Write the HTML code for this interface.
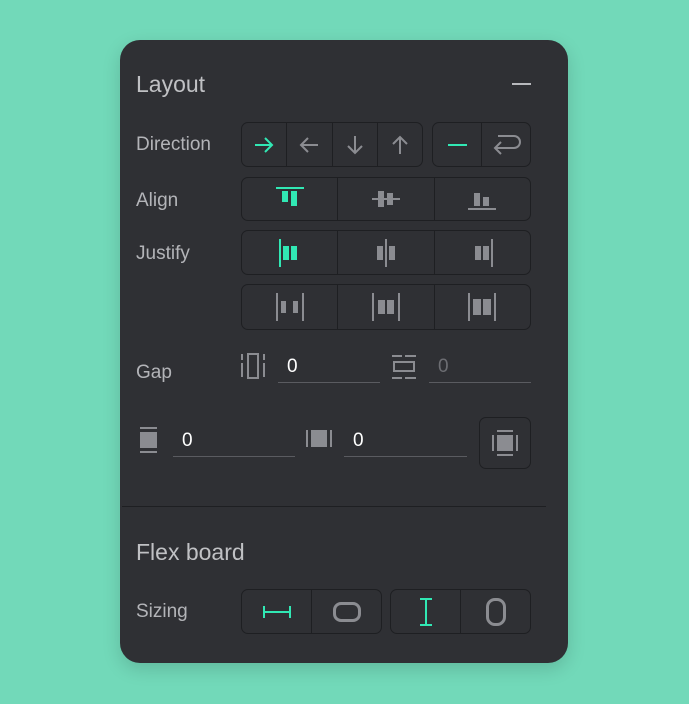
<!DOCTYPE html>
<html><head><style>
*{margin:0;padding:0;box-sizing:border-box}
body{width:689px;height:704px;background:#72d9b9;font-family:"Liberation Sans",sans-serif;position:relative;overflow:hidden}
.p{position:absolute;left:120px;top:40px;width:448px;height:623px;background:#2f3034;border-radius:20px;box-shadow:0 6px 18px rgba(0,0,0,.15)}
.a{position:absolute}
.t{color:#b3b4b8;font-size:19px}
.h{color:#c0c1c4;font-size:23px}
.g{position:absolute;border:1px solid #1e1f22;border-radius:7px;display:flex;overflow:hidden}
.g>div{flex:1;border-left:1px solid #1e1f22;display:flex;align-items:center;justify-content:center}
.g>div:first-child{border-left:none}
.in{position:absolute;border-bottom:1px solid #5a5b60;color:#fff;font-size:19px;padding-left:9px;height:30px;line-height:28px}
svg{display:block}
</style></head><body>
<div class="p"></div>
<div class="a h" style="left:136px;top:71px">Layout</div>
<div class="a" style="left:512px;top:83px;width:19px;height:2px;background:#b8b9bd"></div>

<div class="a t" style="left:136px;top:134px">Direction</div>
<div class="g" style="left:241px;top:122px;width:182px;height:45px">
<div><svg width="22" height="22" viewBox="0 0 22 22" fill="none" stroke="#31e8b4" stroke-width="2"><path d="M2 11h17M12 4l7 7-7 7"/></svg></div>
<div><svg width="22" height="22" viewBox="0 0 22 22" fill="none" stroke="#8b8c91" stroke-width="2"><path d="M20 11H3M10 4l-7 7 7 7"/></svg></div>
<div><svg width="22" height="22" viewBox="0 0 22 22" fill="none" stroke="#8b8c91" stroke-width="2"><path d="M11 2v17M4 12l7 7 7-7"/></svg></div>
<div><svg width="22" height="22" viewBox="0 0 22 22" fill="none" stroke="#8b8c91" stroke-width="2"><path d="M11 20V3M4 10l7-7 7 7"/></svg></div>
</div>
<div class="g" style="left:432px;top:122px;width:99px;height:45px">
<div><div style="width:19px;height:2px;background:#31e8b4"></div></div>
<div><svg width="32" height="28" viewBox="0 0 32 28" fill="none" stroke="#8b8c91" stroke-width="2"><path d="M8 5h16a6 6 0 0 1 0 12H5M11 11l-6 6 6 6"/></svg></div>
</div>

<div class="a t" style="left:136px;top:190px">Align</div>
<div class="g" style="left:241px;top:177px;width:290px;height:44px">
<div><svg width="30" height="24" viewBox="0 0 30 24"><rect x="1" y="0" width="28" height="2" fill="#31e8b4"/><rect x="7" y="4" width="6" height="11" fill="#31e8b4"/><rect x="16" y="4" width="6" height="15" fill="#31e8b4"/></svg></div>
<div><svg width="30" height="24" viewBox="0 0 30 24"><rect x="1" y="11" width="28" height="2" fill="#8b8c91"/><rect x="7" y="4" width="6" height="16" fill="#8b8c91"/><rect x="16" y="6" width="6" height="12" fill="#8b8c91"/></svg></div>
<div><svg width="30" height="24" viewBox="0 0 30 24"><rect x="1" y="21" width="28" height="2" fill="#8b8c91"/><rect x="7" y="6" width="6" height="13" fill="#8b8c91"/><rect x="16" y="10" width="6" height="9" fill="#8b8c91"/></svg></div>
</div>

<div class="a t" style="left:136px;top:243px">Justify</div>
<div class="g" style="left:241px;top:230px;width:290px;height:45px">
<div><svg width="30" height="30" viewBox="0 0 30 30"><rect x="4" y="1" width="2" height="28" fill="#31e8b4"/><rect x="8" y="8" width="6" height="14" fill="#31e8b4"/><rect x="16" y="8" width="6" height="14" fill="#31e8b4"/></svg></div>
<div><svg width="30" height="30" viewBox="0 0 30 30"><rect x="14" y="1" width="2" height="28" fill="#8b8c91"/><rect x="6" y="8" width="6" height="14" fill="#8b8c91"/><rect x="18" y="8" width="6" height="14" fill="#8b8c91"/></svg></div>
<div><svg width="30" height="30" viewBox="0 0 30 30"><rect x="24" y="1" width="2" height="28" fill="#8b8c91"/><rect x="8" y="8" width="6" height="14" fill="#8b8c91"/><rect x="16" y="8" width="6" height="14" fill="#8b8c91"/></svg></div>
</div>
<div class="g" style="left:241px;top:284px;width:290px;height:46px">
<div><svg width="30" height="30" viewBox="0 0 30 30" fill="#8b8c91"><rect x="1" y="1" width="2" height="28"/><rect x="27" y="1" width="2" height="28"/><rect x="6" y="9" width="5" height="12"/><rect x="18" y="9" width="5" height="12"/></svg></div>
<div><svg width="30" height="30" viewBox="0 0 30 30" fill="#8b8c91"><rect x="1" y="1" width="2" height="28"/><rect x="27" y="1" width="2" height="28"/><rect x="7" y="8" width="7" height="14"/><rect x="16" y="8" width="7" height="14"/></svg></div>
<div><svg width="30" height="30" viewBox="0 0 30 30" fill="#8b8c91"><rect x="1" y="1" width="2" height="28"/><rect x="27" y="1" width="2" height="28"/><rect x="6" y="7" width="8" height="16"/><rect x="16" y="7" width="8" height="16"/></svg></div>
</div>

<div class="a t" style="left:136px;top:362px">Gap</div>
<svg class="a" style="left:240px;top:353px" width="26" height="26" viewBox="0 0 26 26" fill="#8b8c91"><rect x="1" y="1" width="2" height="6"/><rect x="1" y="10" width="2" height="14"/><rect x="23" y="1" width="2" height="6"/><rect x="23" y="10" width="2" height="14"/><rect x="8" y="1" width="10" height="24" fill="none" stroke="#8b8c91" stroke-width="2"/></svg>
<div class="in" style="left:278px;top:353px;width:102px">0</div>
<svg class="a" style="left:391px;top:354px" width="26" height="26" viewBox="0 0 26 26" fill="#8b8c91"><rect x="1" y="1" width="10" height="2"/><rect x="14" y="1" width="11" height="2"/><rect x="1" y="23" width="10" height="2"/><rect x="14" y="23" width="11" height="2"/><rect x="3" y="8" width="20" height="9" fill="none" stroke="#8b8c91" stroke-width="2"/></svg>
<div class="in" style="left:429px;top:353px;width:102px;color:#6c6d72">0</div>

<svg class="a" style="left:139px;top:427px" width="20" height="28" viewBox="0 0 20 28" fill="#8b8c91"><rect x="1" y="0" width="17" height="2"/><rect x="1" y="24" width="17" height="2"/><rect x="1" y="5" width="17" height="16"/></svg>
<div class="in" style="left:173px;top:427px;width:122px">0</div>
<svg class="a" style="left:306px;top:428px" width="28" height="22" viewBox="0 0 28 22" fill="#8b8c91"><rect x="0" y="2" width="2" height="17"/><rect x="24" y="2" width="2" height="17"/><rect x="5" y="2" width="16" height="17"/></svg>
<div class="in" style="left:344px;top:427px;width:123px">0</div>
<div class="a" style="left:479px;top:417px;width:52px;height:52px;border:1px solid #1e1f22;border-radius:7px;display:flex;align-items:center;justify-content:center"><svg width="26" height="26" viewBox="0 0 26 26" fill="#8b8c91"><rect x="5" y="0" width="16" height="2"/><rect x="5" y="24" width="16" height="2"/><rect x="0" y="5" width="2" height="16"/><rect x="24" y="5" width="2" height="16"/><rect x="5" y="5" width="16" height="16"/></svg></div>

<div class="a" style="left:122px;top:506px;width:424px;height:1px;background:#1e1f22"></div>
<div class="a h" style="left:136px;top:539px">Flex board</div>

<div class="a t" style="left:136px;top:601px">Sizing</div>
<div class="g" style="left:241px;top:589px;width:141px;height:45px">
<div><svg width="30" height="16" viewBox="0 0 30 16" fill="#31e8b4"><rect x="1" y="2" width="2" height="12"/><rect x="27" y="2" width="2" height="12"/><rect x="1" y="7" width="28" height="2"/></svg></div>
<div><div style="width:28px;height:20px;border:3px solid #8b8c91;border-radius:8px"></div></div>
</div>
<div class="g" style="left:390px;top:589px;width:141px;height:45px">
<div><svg width="14" height="30" viewBox="0 0 14 30" fill="#31e8b4"><rect x="1" y="1" width="12" height="2"/><rect x="1" y="27" width="12" height="2"/><rect x="6" y="1" width="2" height="28"/></svg></div>
<div><div style="width:20px;height:28px;border:3px solid #8b8c91;border-radius:9px"></div></div>
</div>
</body></html>
